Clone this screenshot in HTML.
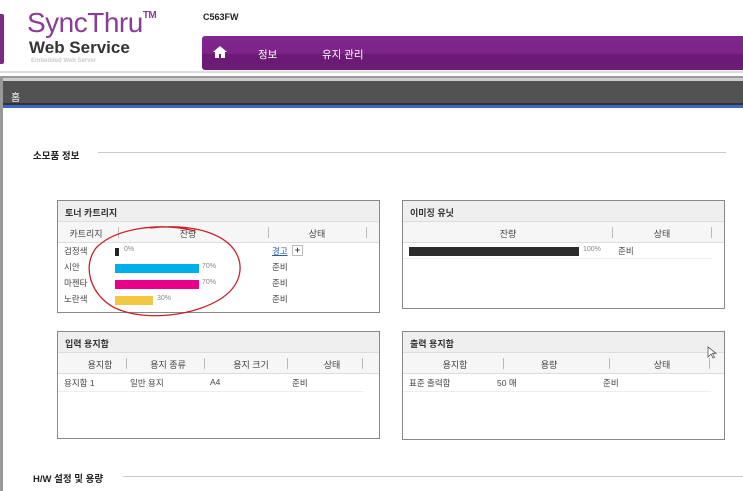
<!DOCTYPE html>
<html><head><meta charset="utf-8"><style>
*{margin:0;padding:0;box-sizing:border-box}
body{width:743px;height:491px;overflow:hidden;background:#fff;font-family:"Liberation Sans","Noto Sans CJK KR",sans-serif;font-size:9px;color:#333;position:relative}
.a{position:absolute;white-space:nowrap}
.box{position:absolute;border:1px solid #888;background:#fff}
.bh{height:21px;background:#efefef;border-bottom:1px solid #ddd;font-weight:bold;padding:5px 7px;font-size:9px}
.ch{height:21px;background:#f6f6f6;border-bottom:1px solid #ddd;position:relative}
.ch span{position:absolute;top:5px;transform:translateX(-50%);color:#444;white-space:nowrap}
.sep{position:absolute;top:5px;width:1px;height:11px;background:#bbb}
.row{position:absolute;height:16px;font-size:8.5px;color:#444;white-space:nowrap;width:300px}
</style></head><body>
<!-- header -->
<div class="a" style="left:0;top:14px;width:4px;height:50px;background:#7b2a85;border-radius:0 2px 2px 0"></div>
<div class="a" style="left:27px;top:7px;font-size:28px;color:#8a3d96;letter-spacing:-0.5px;line-height:32px">SyncThru<sup style="font-size:10px;vertical-align:top;line-height:18px;color:#8a3d96;font-weight:bold">TM</sup></div>
<div class="a" style="left:29px;top:38px;font-size:17px;font-weight:bold;color:#333;line-height:20px">Web Service</div>
<div class="a" style="left:31px;top:58px;font-size:6px;color:#ccc;font-weight:bold">Embedded Web Server</div>
<div class="a" style="left:203px;top:12px;font-size:9px;font-weight:bold;color:#222">C563FW</div>
<div class="a" style="left:202px;top:36px;width:541px;height:34px;background:linear-gradient(#80268e 0,#7d2489 50%,#6b1a75 55%,#6b1a75 100%);border-radius:3px 0 0 3px"></div>
<svg class="a" style="left:213px;top:46px" width="14" height="12" viewBox="0 0 14 12"><path d="M7 0L0 6h2v6h4V8h2v4h4V6h2z" fill="#fff"/></svg>
<div class="a" style="left:258px;top:47px;color:#fff;font-size:10.5px">정보</div>
<div class="a" style="left:322px;top:47px;color:#fff;font-size:10.5px">유지 관리</div>
<div class="a" style="left:0;top:71px;width:743px;height:2px;background:#ddd"></div>
<div class="a" style="left:0;top:76px;width:743px;height:2px;background:#999"></div>
<div class="a" style="left:0;top:78px;width:743px;height:3px;background:#ccc"></div>
<div class="a" style="left:2px;top:81px;width:741px;height:23px;background:#525252"></div>
<div class="a" style="left:2px;top:103px;width:741px;height:2px;background:#333"></div>
<div class="a" style="left:2px;top:105px;width:741px;height:3px;background:#3a66c4"></div>
<div class="a" style="left:11px;top:89px;color:#fff;font-size:10px">홈</div>
<div class="a" style="left:0;top:78px;width:3px;height:413px;background:#999"></div>
<!-- section -->
<div class="a" style="left:33px;top:148px;font-weight:bold;font-size:9.5px;color:#222">소모품 정보</div>
<div class="a" style="left:98px;top:152px;width:628px;height:1px;background:#ccc"></div>
<div class="a" style="left:33px;top:471px;font-weight:bold;font-size:9.5px;color:#222">H/W 설정 및 용량</div>
<div class="a" style="left:123px;top:476px;width:620px;height:1px;background:#ccc"></div>

<!-- toner -->
<div class="box" style="left:57px;top:200px;width:323px;height:113px">
<div class="bh">토너 카트리지</div>
<div class="ch"><span style="left:28px">카트리지</span><div class="sep" style="left:60px"></div><span style="left:130px">잔량</span><div class="sep" style="left:210px"></div><span style="left:259px">상태</span><div class="sep" style="left:308px"></div></div>
<div class="row" style="left:0;top:44px">
<div class="a" style="left:6px;top:0">검정색</div><div class="a" style="left:57px;top:3px;width:4px;height:8px;background:#222"></div><div class="a" style="left:66px;top:1px;font-size:7px;color:#888">0%</div>
<div class="a" style="left:214px;top:0;color:#2a5ea8;text-decoration:underline">경고</div><div class="a" style="left:234px;top:0;width:11px;height:11px;border:1px solid #bbb;font-size:9px;line-height:9px;text-align:center;font-weight:bold">+</div></div>
<div class="row" style="left:0;top:60px"><div class="a" style="left:6px;top:0">시안</div><div class="a" style="left:57px;top:3px;width:84px;height:9px;background:#00aee8"></div><div class="a" style="left:144px;top:2px;font-size:7px;color:#888">70%</div><div class="a" style="left:214px;top:0">준비</div></div>
<div class="row" style="left:0;top:76px"><div class="a" style="left:6px;top:0">마젠타</div><div class="a" style="left:57px;top:3px;width:84px;height:9px;background:#e8008a"></div><div class="a" style="left:144px;top:2px;font-size:7px;color:#888">70%</div><div class="a" style="left:214px;top:0">준비</div></div>
<div class="row" style="left:0;top:92px"><div class="a" style="left:6px;top:0">노란색</div><div class="a" style="left:57px;top:3px;width:38px;height:9px;background:#f2c842"></div><div class="a" style="left:99px;top:2px;font-size:7px;color:#888">30%</div><div class="a" style="left:214px;top:0">준비</div></div>
</div>

<!-- imaging -->
<div class="box" style="left:402px;top:200px;width:323px;height:109px">
<div class="bh">이미징 유닛</div>
<div class="ch"><span style="left:105px">잔량</span><div class="sep" style="left:209px"></div><span style="left:259px">상태</span><div class="sep" style="left:308px"></div></div>
<div class="row" style="left:0;top:42px;width:310px;border-bottom:1px solid #eee"><div class="a" style="left:6px;top:4px;width:170px;height:9px;background:#2b2b2b"></div><div class="a" style="left:180px;top:3px;font-size:7px;color:#888">100%</div><div class="a" style="left:215px;top:2px">준비</div></div>
</div>

<!-- input -->
<div class="box" style="left:57px;top:331px;width:323px;height:108px">
<div class="bh">입력 용지함</div>
<div class="ch"><span style="left:42px">용지함</span><div class="sep" style="left:68px"></div><span style="left:110px">용지 종류</span><div class="sep" style="left:146px"></div><span style="left:193px">용지 크기</span><div class="sep" style="left:229px"></div><span style="left:274px">상태</span><div class="sep" style="left:304px"></div></div>
<div class="row" style="left:0;top:44px;width:306px;border-bottom:1px solid #eee"><div class="a" style="left:6px;top:1px">용지함 1</div><div class="a" style="left:72px;top:1px">일반 용지</div><div class="a" style="left:152px;top:1px">A4</div><div class="a" style="left:234px;top:1px">준비</div></div>
</div>

<!-- output -->
<div class="box" style="left:402px;top:331px;width:323px;height:109px">
<div class="bh">출력 용지함</div>
<div class="ch"><span style="left:52px">용지함</span><div class="sep" style="left:100px"></div><span style="left:146px">용량</span><div class="sep" style="left:206px"></div><span style="left:259px">상태</span><div class="sep" style="left:306px"></div></div>
<div class="row" style="left:0;top:44px;width:308px;border-bottom:1px solid #eee"><div class="a" style="left:6px;top:1px">표준 출력함</div><div class="a" style="left:94px;top:1px">50 매</div><div class="a" style="left:200px;top:1px">준비</div></div>
</div>
<svg class="a" style="left:707px;top:346px" width="10" height="14" viewBox="0 0 10 14"><path d="M1 1v10l3-3 2 4 1.5-.7-2-4H9z" fill="#fff" stroke="#555" stroke-width="0.8"/></svg>

<!-- red circle -->
<svg class="a" style="left:0;top:0" width="743" height="491"><path d="M195 231C160 222 115 228 96 248C82 266 90 295 115 308C145 322 195 316 222 298C245 282 245 258 228 243C212 230 185 224 150 228" fill="none" stroke="#c8222a" stroke-width="1.3"/></svg>
</body></html>
